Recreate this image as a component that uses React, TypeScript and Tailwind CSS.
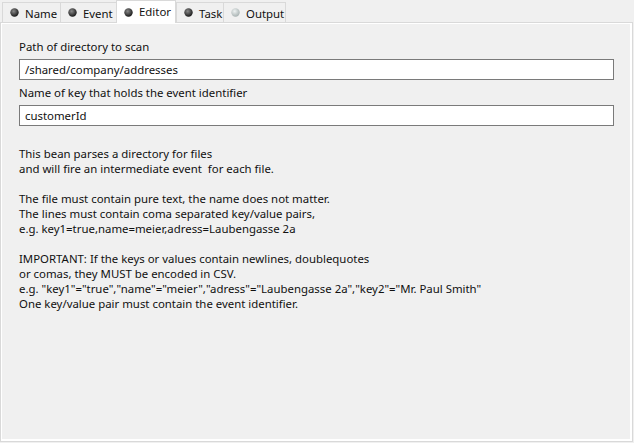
import React from "react";

function Dot({ light, id }: { light?: boolean; id: string }) {
  return (
    <svg width="9" height="9" viewBox="0 0 9 9" className="shrink-0">
      <defs>
        <radialGradient id={id} cx="40%" cy="35%" r="65%">
          <stop offset="0%" stopColor={light ? "#eef2f2" : "#8a8a8a"} />
          <stop offset="100%" stopColor={light ? "#a9b3b3" : "#1a1a1a"} />
        </radialGradient>
      </defs>
      <circle cx="4.5" cy="4.5" r="4.2" fill={`url(#${id})`} />
    </svg>
  );
}

const tabs = [
  { name: "Name", w: 58 },
  { name: "Event", w: 56 },
  { name: "Editor", w: 60, sel: true },
  { name: "Task", w: 47 },
  { name: "Output", w: 63, light: true },
];

export default function App() {
  const lines = [
    "This bean parses a directory for files",
    "and will fire an intermediate event\u00a0 for each file.",
    "",
    "The file must contain pure text, the name does not matter.",
    "The lines must contain coma separated key/value pairs,",
    "e.g. key1=true,name=meier,adress=Laubengasse 2a",
    "",
    "IMPORTANT: If the keys or values contain newlines, doublequotes",
    "or comas, they MUST be encoded in CSV.",
    'e.g. "key1"="true","name"="meier","adress"="Laubengasse 2a","key2"="Mr. Paul Smith"',
    "One key/value pair must contain the event identifier.",
  ];
  return (
    <div
      className="w-[634px] h-[443px] bg-[#f0f0f0] text-[11.4px] text-[#111] overflow-hidden"
      style={{ fontFamily: '"Noto Sans", "Open Sans", sans-serif' }}
    >
      <div className="relative flex items-end h-[22px] pl-[2px] z-10">
        {tabs.map((t, i) =>
          t.sel ? (
            <div
              key={t.name}
              className="h-[23px] flex items-start pt-[3px] gap-[6px] pl-[7px] bg-white border-t border-l border-r border-[#d9d9d9] self-start"
              style={{ width: t.w }}
            >
              <span className="mt-[4px] flex"><Dot id={"d" + i} /></span>
              <span className="leading-[15px]">{t.name}</span>
            </div>
          ) : (
            <div
              key={t.name}
              className="h-[20px] flex items-center gap-[6px] pl-[7px] bg-[#f0f0f0] border-t border-l border-[#d9d9d9] last:border-r"
              style={{ width: t.w }}
            >
              <Dot light={t.light} id={"d" + i} />
              <span className="leading-[15px] pt-[1px]">{t.name}</span>
            </div>
          )
        )}
      </div>
      <div className="w-[633px] h-[420px] border border-[#d9d9d9]">
        <div className="h-full border border-white border-r-[2px] border-b-[2px] bg-[#f0f0f0] pl-[17px] pr-[16px] pt-[14px]">
          <div className="leading-[16px] h-[21px] pt-[1px]">Path of directory to scan</div>
          <div className="h-[21px] bg-white border border-[#7a7a7a] pl-[5px] flex items-center">
            <span className="leading-[15px]">/shared/company/addresses</span>
          </div>
          <div className="leading-[16px] h-[25px] pt-[5px]">Name of key that holds the event identifier</div>
          <div className="h-[21px] bg-white border border-[#7a7a7a] pl-[5px] flex items-center">
            <span className="leading-[15px]">customerId</span>
          </div>
          <div className="pt-[20px]">
            {lines.map((l, i) => (
              <div key={i} className="leading-[15px] h-[15px] whitespace-pre">
                {l}
              </div>
            ))}
          </div>
        </div>
      </div>
    </div>
  );
}
